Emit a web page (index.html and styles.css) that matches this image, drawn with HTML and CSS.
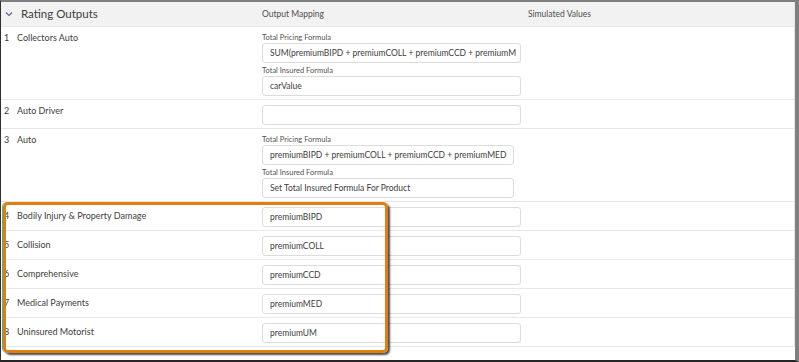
FILE: index.html
```html
<!DOCTYPE html>
<html>
  <head>
    <title>Rating Outputs</title>
    <link rel="stylesheet" href="styles.css">
  </head>
  <body>
    <div class="frame">
      <div class="table">
        <div class="row header">
          <div class="cell name-cell">
            <svg class="chevron" width="8" height="6" viewBox="0 0 8 6"><path d="M1 1.5 L4 4.5 L7 1.5" fill="none" stroke="#54698d" stroke-width="1.2"/></svg>
            <span class="section-title">Rating Outputs</span>
          </div>
          <div class="cell col-title">Output Mapping</div>
          <div class="cell col-title">Simulated Values</div>
        </div>

        <div class="row tall">
          <div class="cell name-cell"><span class="num">1</span>Collectors Auto</div>
          <div class="cell">
            <p class="field-label">Total Pricing Formula</p>
            <div class="input">SUM(premiumBIPD + premiumCOLL + premiumCCD + premiumM</div>
            <p class="field-label">Total Insured Formula</p>
            <div class="input">carValue</div>
          </div>
          <div class="cell"></div>
        </div>

        <div class="row">
          <div class="cell name-cell"><span class="num">2</span>Auto Driver</div>
          <div class="cell"><div class="input"></div></div>
          <div class="cell"></div>
        </div>

        <div class="row tall">
          <div class="cell name-cell"><span class="num">3</span>Auto</div>
          <div class="cell">
            <p class="field-label">Total Pricing Formula</p>
            <div class="input narrow">premiumBIPD + premiumCOLL + premiumCCD + premiumMED</div>
            <p class="field-label">Total Insured Formula</p>
            <div class="input narrow">Set Total Insured Formula For Product</div>
          </div>
          <div class="cell"></div>
        </div>

        <div class="row child">
          <div class="cell name-cell"><span class="num">4</span>Bodily Injury &amp; Property Damage</div>
          <div class="cell"><div class="input">premiumBIPD</div></div>
          <div class="cell"></div>
        </div>
        <div class="row child">
          <div class="cell name-cell"><span class="num">5</span>Collision</div>
          <div class="cell"><div class="input">premiumCOLL</div></div>
          <div class="cell"></div>
        </div>
        <div class="row child">
          <div class="cell name-cell"><span class="num">6</span>Comprehensive</div>
          <div class="cell"><div class="input">premiumCCD</div></div>
          <div class="cell"></div>
        </div>
        <div class="row child">
          <div class="cell name-cell"><span class="num">7</span>Medical Payments</div>
          <div class="cell"><div class="input">premiumMED</div></div>
          <div class="cell"></div>
        </div>
        <div class="row child">
          <div class="cell name-cell"><span class="num">8</span>Uninsured Motorist</div>
          <div class="cell"><div class="input">premiumUM</div></div>
          <div class="cell"></div>
        </div>
      </div>

      <div class="highlight"></div>
    </div>
  </body>
</html>
```

FILE: styles.css
```css
body {
    margin: 0;
    background-color: white;
    font-family: Lato, "Liberation Sans", sans-serif;
    color: #3e3e3c;
}

.frame {
    position: relative;
    box-sizing: border-box;
    width: 799px;
    height: 362px;
    border-top: 2px solid #7f7f7f;
    border-right: 4px solid #7f7f7f;
    border-left: 1px solid #2f2f2f;
    border-bottom: 2px solid #262626;
    overflow: hidden;
}

.table {
    width: 793px;
    border-right: 1px solid #e6e6e6;
}

.row {
    display: grid;
    grid-template-columns: 261px 266px 1fr;
    box-sizing: border-box;
    height: 29px;
    border-bottom: 1px solid #e8e8e8;
}

.row.tall {
    height: 73px;
}

.cell {
    padding-top: 5px;
    font-size: 9px;
    line-height: 12px;
}

.name-cell {
    padding-left: 3px;
}

.row.child .name-cell {
    padding-top: 8px;
}

.row.child .cell:nth-child(2) {
    padding-top: 5px;
}

.num {
    display: inline-block;
    width: 13px;
}

.header {
    background-color: #f3f2f2;
    height: 25px;
}

.header .cell {
    display: flex;
    align-items: center;
    padding: 0;
}

.header .name-cell {
    padding-left: 4px;
}

.chevron {
    margin-right: 8px;
}

.section-title {
    font-size: 11.5px;
}

.col-title {
    font-size: 8.5px;
    color: #514f4d;
}

.field-label {
    margin: 0;
    font-size: 7.5px;
    line-height: 10px;
    color: #54524f;
}

.row.tall .cell:nth-child(2) {
    padding-top: 6px;
}

.field-label + .input + .field-label {
    margin-top: 3px;
}

.input {
    box-sizing: border-box;
    width: 259px;
    height: 20px;
    line-height: 18px;
    padding-left: 7px;
    border: 1px solid #dedcda;
    border-radius: 3px;
    font-size: 8.5px;
    white-space: nowrap;
    overflow: hidden;
}

.input.narrow {
    width: 252px;
}

.highlight {
    position: absolute;
    left: 2px;
    top: 200px;
    width: 385px;
    height: 151px;
    box-sizing: border-box;
    border: 3px solid #e07f0f;
    border-radius: 5px;
    box-shadow: -1px 0 0 #3fb7a3, 2px 2px 2px rgba(0, 0, 0, 0.7);
}
```
